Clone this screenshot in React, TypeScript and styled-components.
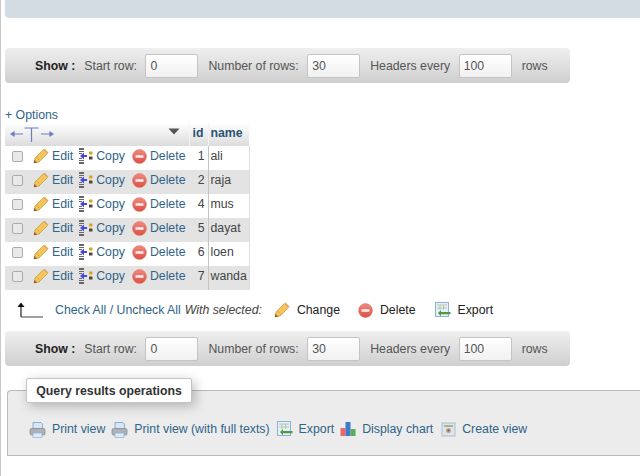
import React from "react";
import styled, { createGlobalStyle } from "styled-components";

const GlobalStyle = createGlobalStyle`
  html, body { margin: 0; padding: 0; background: #fff; }
  body {
    font-family: "Liberation Sans", Arial, sans-serif;
    font-size: 12.3px;
    color: #444;
    overflow: hidden;
  }
`;

const Page = styled.div`
  width: 640px;
  height: 476px;
  box-sizing: border-box;
  border-left: 1px solid #c8c8c8;
  padding-left: 4px;
  overflow: hidden;
`;

const TopBar = styled.div`
  height: 18px;
  background: #d3dce3;
  border-bottom-left-radius: 4px;
`;

const NavBar = styled.form<{ $top: number }>`
  display: flex;
  align-items: center;
  width: 565px;
  height: 35px;
  box-sizing: border-box;
  margin-top: ${(p) => p.$top}px;
  padding-left: 30px;
  border-radius: 4px;
  background: linear-gradient(#efefef, #cfcfcf);
  color: #555;
`;

const ShowLabel = styled.b`
  color: #222;
  margin-right: 9px;
`;

const RowInput = styled.input`
  width: 53px;
  height: 24px;
  box-sizing: border-box;
  margin: 0 10px 0 8.5px;
  padding: 0 4px;
  border: 1px solid #c4c4c4;
  border-radius: 2px;
  background: linear-gradient(#ffffff, #f1f1f1);
  font: inherit;
  color: #555;
`;

const OptionsLink = styled.a`
  display: block;
  margin-top: 25px;
  height: 15px;
  line-height: 15px;
  color: #2f6488;
`;

const Table = styled.table`
  border-collapse: collapse;
  width: 244px;
  table-layout: fixed;
`;

const HeadCell = styled.th<{ $w: number }>`
  width: ${(p) => p.$w}px;
  height: 23px;
  padding: 0 0 4px 3px;
  box-sizing: border-box;
  background: linear-gradient(#ffffff, #dcdcdc);
  border-right: 1px solid #f4f4f4;
  color: #2b5478;
  text-align: left;
  font-size: 12.3px;
  &:last-child { border-right: 0; padding-left: 2px; }
`;

const HeadTools = styled.div`
  display: flex;
  align-items: center;
  justify-content: space-between;
  padding: 3px 9px 0 2px;
`;

const Caret = styled.span`
  display: flex;
  margin-top: -5px;
`;

const Row = styled.tr<{ $odd: boolean }>`
  height: 24px;
  background: ${(p) => (p.$odd ? "#fff" : "#e3e3e3")};
`;

const Cell = styled.td<{ $num?: boolean }>`
  padding: 0 3px 4px;
  box-sizing: border-box;
  color: #444;
  white-space: nowrap;
  text-align: ${(p) => (p.$num ? "right" : "left")};
  border-right: 1px solid #c4c4c4;
  &:last-child { border-right: 1px solid #ddd; padding-left: 2px; }
`;

const ActionsCell = styled.td`
  padding: 0 0 4px 7px;
  white-space: nowrap;
`;

const Actions = styled.div`
  display: flex;
  align-items: center;
`;

const FakeCheck = styled.span`
  display: inline-block;
  width: 9px;
  height: 9px;
  margin-right: 10px;
  border: 1px solid #aaa;
  border-radius: 2px;
  background: #e9e9e9;
`;

const ActionLink = styled.a<{ $gap: number }>`
  display: inline-flex;
  align-items: center;
  gap: 3px;
  margin-right: ${(p) => p.$gap}px;
  color: #2f6488;
`;

const CheckAllRow = styled.div`
  display: flex;
  align-items: center;
  height: 40px;
  padding: 0 0 1px 11px;
`;

const Muted = styled.i`
  color: #444;
  margin-left: 4px;
`;

const CheckAllLink = styled.a`
  color: #2f6488;
  margin-left: 11px;
`;

const BulkAction = styled.span<{ $left: number }>`
  display: inline-flex;
  align-items: center;
  gap: 7px;
  margin-left: ${(p) => p.$left}px;
  color: #222;
`;

const Fieldset = styled.section`
  position: relative;
  margin: 24px 0 0 2px;
  height: 66px;
  box-sizing: border-box;
  padding: 12px 0 0 21px;
  background: #ececec;
  border: 1px solid #bbb;
  border-right: 0;
  border-top-left-radius: 4px;
  display: flex;
  align-items: center;
`;

const Legend = styled.div`
  position: absolute;
  left: 18px;
  top: -13px;
  width: 166px;
  height: 25px;
  line-height: 25px;
  box-sizing: border-box;
  text-align: center;
  background: #fff;
  border: 1px solid #c4c4c4;
  border-radius: 2px;
  box-shadow: 3px 3px 12px rgba(0, 0, 0, 0.25);
  font-weight: bold;
  color: #333;
`;

const OpLink = styled.a<{ $gap: number }>`
  display: inline-flex;
  align-items: center;
  gap: 6px;
  margin-right: ${(p) => p.$gap}px;
  color: #2f6488;
`;

const Pencil = () => (
  <svg width="16" height="16" viewBox="0 0 16 16">
    <path d="M1 15l1-5L10.500 1.500l4 4L6 14z" fill="#f4c55a" stroke="#cf9a42" strokeWidth="0.8" />
    <path d="M10.500 1.500l1-1 4 4-1 1z" fill="#e6a878" />
    <path d="M3.500 9l3.500 3.500" stroke="#e8a83c" strokeWidth="1" />
    <path d="M1 15l.6-3 2.400 2.400z" fill="#7a5630" />
  </svg>
);

const CopyIcon = () => (
  <svg width="15" height="16" viewBox="0 0 15 16">
    <path d="M1 0h5v2H1zM1 3h5v1H1zM1 5h3v1H1zM1 10h3v1H1zM1 12h5v1H1zM1 14h5v2H1z" fill="#666" />
    <path d="M2 8l4-3.500V7h3v2H6v2.500z" fill="#4a48d4" />
    <rect x="11" y="3.500" width="3.500" height="3" rx="0.500" fill="#d9a520" />
    <rect x="11" y="8.500" width="3.500" height="3" rx="0.500" fill="#4a4a3c" />
  </svg>
);

const DeleteIcon = () => (
  <svg width="15" height="15" viewBox="0 0 15 15">
    <defs>
      <linearGradient id="del" x1="0" y1="0" x2="0" y2="1">
        <stop offset="0" stopColor="#f08a80" />
        <stop offset="1" stopColor="#dc5044" />
      </linearGradient>
    </defs>
    <circle cx="7.500" cy="7.500" r="6.900" fill="url(#del)" stroke="#d6665c" strokeWidth="0.500" />
    <rect x="3.500" y="6.200" width="8" height="2.600" fill="#fbeaea" />
  </svg>
);

const ExportIcon = () => (
  <svg width="16" height="16" viewBox="0 0 16 16">
    <rect x="0.500" y="0.500" width="13" height="14" fill="#e6eef8" stroke="#8fb0d8" />
    <path d="M2 3h10M2 6h10M5 3v5M8.500 3v5" stroke="#a8c4a0" strokeWidth="0.800" />
    <path d="M3 11l3-3v2h9.500v2.200H6v2z" fill="#4f9a3c" />
  </svg>
);

const PrintIcon = () => (
  <svg width="17" height="17" viewBox="0 0 17 17">
    <path d="M4 8V1.500h8l1.500 1.500v5z" fill="#d6e5f7" stroke="#7d9dc8" strokeWidth="0.800" />
    <rect x="1" y="7.500" width="15" height="6.500" rx="1.500" fill="#aeb2b8" stroke="#777b80" strokeWidth="0.600" />
    <rect x="4" y="12" width="9" height="4.500" fill="#dce9f8" stroke="#8aa6cc" strokeWidth="0.600" />
  </svg>
);

const ChartIcon = () => (
  <svg width="16" height="16" viewBox="0 0 16 16">
    <rect x="0.500" y="7" width="5" height="8" fill="#ec6a63" />
    <rect x="5.500" y="1" width="5" height="14" fill="#3f79d0" />
    <rect x="10.500" y="8" width="5" height="7" fill="#58ad5a" />
  </svg>
);

const ViewIcon = () => (
  <svg width="15" height="15" viewBox="0 0 15 15">
    <rect x="1" y="1" width="13" height="13" fill="#dfe4ea" stroke="#a9bdd6" />
    <rect x="3" y="3" width="9" height="2" fill="#a8b48a" />
    <circle cx="7.500" cy="8.500" r="2.500" fill="#c9a878" />
    <circle cx="7.500" cy="8.500" r="1.100" fill="#4a62b0" />
  </svg>
);

const TableArrows = () => (
  <svg width="44" height="15" viewBox="0 0 44 15">
    <path d="M1 7h12M1 7l3-2v4zM21.500 1v14M14.500 1h14M31 7h12M43 7l-3-2v4z" stroke="#6a7fc0" strokeWidth="1.200" fill="#6a7fc0" />
  </svg>
);

const SortCaret = () => (
  <svg width="12" height="7" viewBox="0 0 12 7">
    <path d="M0.500 0.500h11L6 6.500z" fill="#555" />
  </svg>
);

const CheckArrow = () => (
  <svg width="28" height="18" viewBox="0 0 28 18">
    <path d="M5 16V3" stroke="#222" strokeWidth="1.200" />
    <path d="M1.500 6L5 1.500 8.500 6z" fill="#111" />
    <path d="M5 16h22" stroke="#444" strokeWidth="1" />
  </svg>
);

const rows = [
  { id: 1, name: "ali" },
  { id: 2, name: "raja" },
  { id: 4, name: "mus" },
  { id: 5, name: "dayat" },
  { id: 6, name: "loen" },
  { id: 7, name: "wanda" },
];

const Pager = ({ top }: { top: number }) => (
  <NavBar $top={top}>
    <ShowLabel>Show :</ShowLabel>
    Start row:
    <RowInput readOnly value="0" />
    Number of rows:
    <RowInput readOnly value="30" />
    Headers every
    <RowInput readOnly value="100" />
    rows
  </NavBar>
);

export default function App() {
  return (
    <Page>
      <GlobalStyle />
      <TopBar />
      <Pager top={30} />
      <OptionsLink>+ Options</OptionsLink>
      <Table>
        <thead>
          <tr>
            <HeadCell $w={184}>
              <HeadTools>
                <TableArrows />
                <Caret><SortCaret /></Caret>
              </HeadTools>
            </HeadCell>
            <HeadCell $w={19}>id</HeadCell>
            <HeadCell $w={41}>name</HeadCell>
          </tr>
        </thead>
        <tbody>
          {rows.map((r, i) => (
            <Row key={r.id} $odd={i % 2 === 0}>
              <ActionsCell>
                <Actions>
                  <FakeCheck />
                  <ActionLink $gap={5}><Pencil />Edit</ActionLink>
                  <ActionLink $gap={7}><CopyIcon />Copy</ActionLink>
                  <ActionLink $gap={0}><DeleteIcon />Delete</ActionLink>
                </Actions>
              </ActionsCell>
              <Cell $num>{r.id}</Cell>
              <Cell>{r.name}</Cell>
            </Row>
          ))}
        </tbody>
      </Table>
      <CheckAllRow>
        <CheckArrow />
        <CheckAllLink>Check All / Uncheck All</CheckAllLink>
        <Muted>With selected:</Muted>
        <BulkAction $left={12}><Pencil />Change</BulkAction>
        <BulkAction $left={18}><DeleteIcon />Delete</BulkAction>
        <BulkAction $left={19}><ExportIcon />Export</BulkAction>
      </CheckAllRow>
      <Pager top={0} />
      <Fieldset>
        <Legend>Query results operations</Legend>
        <OpLink $gap={6}><PrintIcon />Print view</OpLink>
        <OpLink $gap={7}><PrintIcon />Print view (with full texts)</OpLink>
        <OpLink $gap={6}><ExportIcon />Export</OpLink>
        <OpLink $gap={8}><ChartIcon />Display chart</OpLink>
        <OpLink $gap={0}><ViewIcon />Create view</OpLink>
      </Fieldset>
    </Page>
  );
}
